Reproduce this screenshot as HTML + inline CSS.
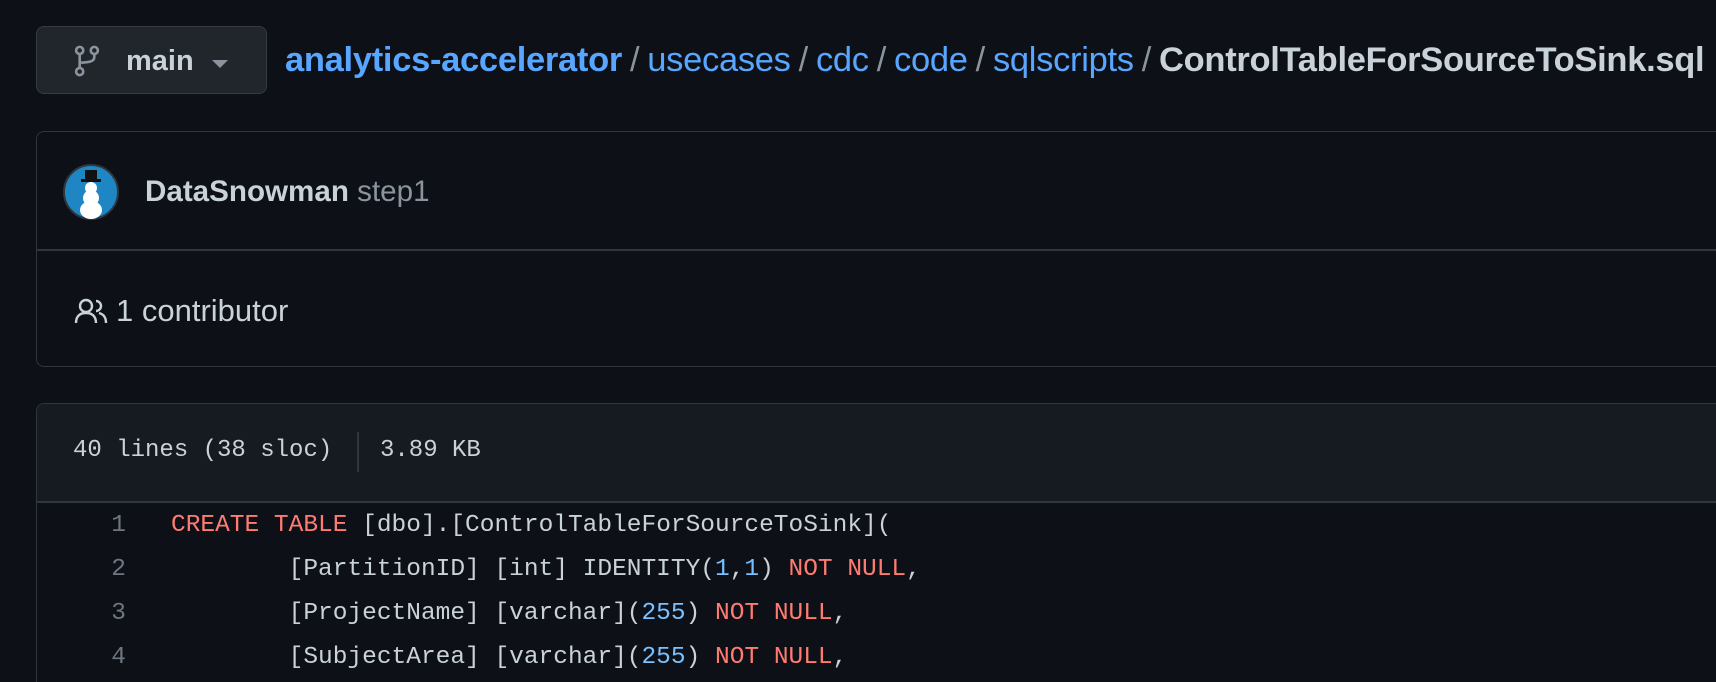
<!DOCTYPE html>
<html style="width:1716px;height:682px;overflow:hidden"><head><meta charset="utf-8"><style>
*{margin:0;padding:0;box-sizing:border-box}
body{width:1716px;height:682px;overflow:hidden;background:#0d1117;font-family:"Liberation Sans",sans-serif;color:#c9d1d9;position:relative}
.abs{position:absolute;white-space:nowrap}
.btn{left:36px;top:26px;width:231px;height:68px;background:#21262d;border:1px solid #363b42;border-radius:8px}
.bc{left:285px;top:38px;font-size:34.5px;letter-spacing:-0.3px;line-height:44px}
.bc a{color:#58a6ff;text-decoration:none}
.bc .s{color:#8b949e;margin:0 8px}
.bc b{color:#c9d1d9}
.box1{left:36px;top:131px;width:1680px;height:236px;border:1px solid #30363d;border-right:none;border-radius:8px 0 0 8px}
.div1{left:37px;top:249px;width:1679px;height:2px;background:#30363d}
.box2{left:36px;top:403px;width:1680px;height:279px;border:1px solid #30363d;border-right:none;border-bottom:none;border-radius:8px 0 0 0;overflow:hidden}
.hdr{position:absolute;left:0;top:0;right:0;height:99px;background:#161b22;border-bottom:2px solid #30363d}
.mono{font-family:"Liberation Mono",monospace}
.code{font-size:24.5px;line-height:44px}
.ln{color:#6e7681;text-align:right;width:40px;left:86px}
.k{color:#ff7b72}.n{color:#79c0ff}
</style></head><body>
<div class="abs btn"></div>
<svg class="abs" style="left:74px;top:44px" width="26" height="34" viewBox="0 0 16 20" fill="none" stroke="#8b949e" stroke-width="1.6"><circle cx="3.5" cy="3.5" r="2.2"/><circle cx="12.5" cy="3.5" r="2.2"/><circle cx="3.5" cy="16.5" r="2.2"/><path d="M3.5 5.7V14.3M12.5 5.7V7.5C12.5 10 10 11 3.5 11"/></svg>
<div class="abs" style="left:126px;top:45px;font-size:29px;font-weight:bold;color:#c9d1d9">main</div>
<svg class="abs" style="left:212px;top:60px" width="16" height="8"><path d="M0 0H16L8 8Z" fill="#8b949e"/></svg>
<div class="abs bc"><a style="font-weight:bold">analytics-accelerator</a><span class="s">/</span><a>usecases</a><span class="s">/</span><a>cdc</a><span class="s">/</span><a>code</a><span class="s">/</span><a>sqlscripts</a><span class="s">/</span><b>ControlTableForSourceToSink.sql</b></div>
<div class="abs box1"></div>
<div class="abs div1"></div>
<svg class="abs" style="left:63px;top:164px" width="56" height="56" viewBox="0 0 56 56"><circle cx="28" cy="28" r="27" fill="#1f86c4" stroke="#30363d" stroke-width="2"/><rect x="22" y="6" width="12" height="10" fill="#111"/><rect x="18" y="15" width="20" height="3" fill="#111"/><circle cx="28" cy="24" r="6" fill="#fff"/><circle cx="28" cy="34" r="8" fill="#fff"/><ellipse cx="28" cy="46" rx="11" ry="9" fill="#fff"/></svg>
<div class="abs" style="left:145px;top:175px;font-size:29.6px"><b style="color:#c9d1d9">DataSnowman</b> <span style="color:#8b949e">step1</span></div>
<svg class="abs" style="left:74px;top:298px" width="34" height="26" viewBox="0 0 34 26" fill="none" stroke="#c9d1d9" stroke-width="2.4"><circle cx="12" cy="8" r="6"/><path d="M2 25C2 18 6 15 12 15S22 18 22 25"/><path d="M22 3A5 5 0 0 1 22 13M25 15C29 16 32 19 32 25"/></svg>
<div class="abs" style="left:116px;top:293px;font-size:31px;color:#c9d1d9">1 contributor</div>
<div class="abs box2"><div class="hdr"></div></div>
<div class="abs mono" style="left:73px;top:437px;font-size:24px;color:#c9d1d9">40 lines (38 sloc)</div>
<div class="abs" style="left:357px;top:432px;width:2px;height:40px;background:#30363d"></div>
<div class="abs mono" style="left:380px;top:437px;font-size:24px;color:#c9d1d9">3.89 KB</div>
<div class="abs mono code ln" style="top:504px">1<br>2<br>3<br>4</div>
<div class="abs mono code" style="left:171px;top:504px;white-space:pre;color:#c9d1d9"><span class="k">CREATE</span> <span class="k">TABLE</span> [dbo].[ControlTableForSourceToSink](
        [PartitionID] [int] IDENTITY(<span class="n">1</span>,<span class="n">1</span>) <span class="k">NOT</span> <span class="k">NULL</span>,
        [ProjectName] [varchar](<span class="n">255</span>) <span class="k">NOT</span> <span class="k">NULL</span>,
        [SubjectArea] [varchar](<span class="n">255</span>) <span class="k">NOT</span> <span class="k">NULL</span>,</div>
</body></html>
